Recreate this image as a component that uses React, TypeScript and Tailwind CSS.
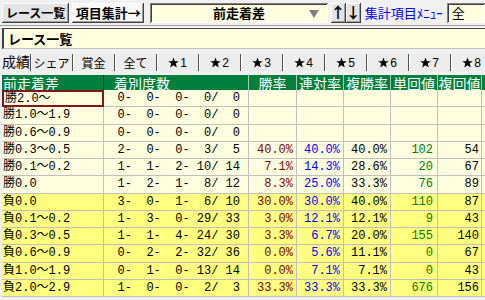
import React from "react";

type Row = {
  label: string;
  n: number[];
  win?: string;
  ren?: string;
  fuku?: string;
  tan?: string;
  fk?: string;
  lose?: boolean;
};

const rows: Row[] = [
  { label: "勝2.0〜", n: [0, 0, 0, 0, 0] },
  { label: "勝1.0〜1.9", n: [0, 0, 0, 0, 0] },
  { label: "勝0.6〜0.9", n: [0, 0, 0, 0, 0] },
  { label: "勝0.3〜0.5", n: [2, 0, 0, 3, 5], win: "40.0%", ren: "40.0%", fuku: "40.0%", tan: "102", fk: "54" },
  { label: "勝0.1〜0.2", n: [1, 1, 2, 10, 14], win: "7.1%", ren: "14.3%", fuku: "28.6%", tan: "20", fk: "67" },
  { label: "勝0.0", n: [1, 2, 1, 8, 12], win: "8.3%", ren: "25.0%", fuku: "33.3%", tan: "76", fk: "89" },
  { label: "負0.0", n: [3, 0, 1, 6, 10], win: "30.0%", ren: "30.0%", fuku: "40.0%", tan: "110", fk: "87", lose: true },
  { label: "負0.1〜0.2", n: [1, 3, 0, 29, 33], win: "3.0%", ren: "12.1%", fuku: "12.1%", tan: "9", fk: "43", lose: true },
  { label: "負0.3〜0.5", n: [1, 1, 4, 24, 30], win: "3.3%", ren: "6.7%", fuku: "20.0%", tan: "155", fk: "140", lose: true },
  { label: "負0.6〜0.9", n: [0, 2, 2, 32, 36], win: "0.0%", ren: "5.6%", fuku: "11.1%", tan: "0", fk: "67", lose: true },
  { label: "負1.0〜1.9", n: [0, 1, 0, 13, 14], win: "0.0%", ren: "7.1%", fuku: "7.1%", tan: "0", fk: "43", lose: true },
  { label: "負2.0〜2.9", n: [1, 0, 0, 2, 3], win: "33.3%", ren: "33.3%", fuku: "33.3%", tan: "676", fk: "156", lose: true },
];

const tabs = ["シェア", "賞金", "全て", "★1", "★2", "★3", "★4", "★5", "★6", "★7", "★8"];

const pad = (v: number) => String(v).padStart(2, " ");
const counts = (n: number[]) =>
  `${pad(n[0])}- ${pad(n[1])}- ${pad(n[2])}- ${pad(n[3])}/ ${pad(n[4])}`;

const grid = "grid grid-cols-[102px_145px_48px_47px_47px_47px_44px_60px]";
const raised =
  "shadow-[inset_-1px_-1px_0_#404040,inset_1px_1px_0_#ffffff,inset_-2px_-2px_0_#a0a0a0]";
const sunken =
  "shadow-[inset_1px_1px_0_#808080,inset_-1px_-1px_0_#ffffff,inset_2px_2px_0_#404040]";

function Star() {
  return (
    <svg width="11" height="11" viewBox="0 0 24 24" className="shrink-0">
      <path d="M12 1 L15 9 L23.5 9.2 L16.8 14.4 L19.2 22.8 L12 17.8 L4.8 22.8 L7.2 14.4 L0.5 9.2 L9 9 Z" fill="#000" />
    </svg>
  );
}

function TabLabel({ t }: { t: string }) {
  if (t.startsWith("★")) {
    return (
      <>
        <Star />
        <span className="font-['Liberation_Sans',sans-serif] text-[12px]">{t.slice(1)}</span>
      </>
    );
  }
  return <>{t}</>;
}

function App() {
  return (
    <div className="w-[485px] h-[300px] overflow-hidden bg-[#f0f0f0] font-['Noto_Sans_CJK_JP',sans-serif] text-black">
      {/* toolbar */}
      <div className="flex items-center h-[25px] pl-[2px] whitespace-nowrap">
        <div className={`flex items-center justify-center w-[71px] h-[20px] bg-[#e4e4e4] text-[12px] font-bold ${raised}`}>
          レース一覧
        </div>
        <div className={`flex items-center justify-center ml-[3px] w-[76px] h-[20px] bg-[#f8f8f8] text-[13px] font-bold ${raised}`}>
          項目集計→
        </div>
        <div className={`relative flex items-center justify-center ml-[6px] w-[187px] h-[20px] bg-[#ffffe0] text-[13px] font-bold ${sunken}`}>
          前走着差
          <div className="absolute right-[9px] top-[7px] w-0 h-0 border-l-[5px] border-r-[5px] border-t-[8px] border-l-transparent border-r-transparent border-t-[#808080]" />
        </div>
        <div className={`flex items-center justify-center ml-[3px] w-[16px] h-[20px] bg-[#e4e4e4] text-[15px] font-bold ${raised}`}>
          ↑
        </div>
        <div className={`flex items-center justify-center w-[16px] h-[20px] bg-[#e4e4e4] text-[15px] font-bold ${raised}`}>
          ↓
        </div>
        <div className="ml-[4px] text-[13px] text-[#0000ff] leading-none">集計項目ﾒﾆｭｰ</div>
        <div className={`flex items-center pl-[5px] ml-[4px] w-[40px] h-[20px] bg-[#ffffe0] text-[13px] ${sunken}`}>
          全
        </div>
      </div>

      {/* separator */}
      <div className="h-[3px] border-t border-[#a0a0a0] border-b border-b-white" />

      {/* title */}
      <div className="ml-[2px] h-[21px] flex items-center pl-[4px] bg-[#ffffe0] border-t border-l-2 border-[#404040] border-b border-b-[#c0c0c0] text-[13px] font-bold">
        レース一覧
      </div>

      {/* tabs */}
      <div className="flex h-[26px] pl-[2px] pt-[2px] whitespace-nowrap">
        <div className="w-[40px] h-[20px] flex items-center justify-center text-[14px] bg-[#f0f0f0]">成績</div>
        {tabs.map((t) => (
          <div
            key={t}
            className="w-[42px] shrink-0 h-[17px] mt-[3px] flex items-center justify-center gap-[1px] text-[12px] border-l border-[#505050] shadow-[inset_1px_0_0_#ffffff] bg-[#ececec]"
          >
            <TabLabel t={t} />
          </div>
        ))}
      </div>

      {/* table */}
      <div className="ml-[2px] w-[540px]">
        <div className={`${grid} h-[15px] bg-[#00803c] text-white text-[14px] leading-none`}>
          <div className="pl-[1px] flex items-center border-r border-[#1a1a1a]">前走着差</div>
          <div className="pl-[10px] flex items-center border-r border-[#a8c8b0]">着別度数</div>
          <div className="flex items-center justify-center border-r border-[#a8c8b0]">勝率</div>
          <div className="flex items-center justify-center border-r border-[#a8c8b0]">連対率</div>
          <div className="flex items-center justify-center border-r border-[#a8c8b0]">複勝率</div>
          <div className="flex items-center justify-center border-r border-[#a8c8b0]">単回値</div>
          <div className="flex items-center justify-center border-r border-[#a8c8b0]">複回値</div>
          <div />
        </div>
        {rows.map((r, i) => (
          <div
            key={r.label}
            className={`${grid} h-[17.25px] text-[12px] leading-none font-['Liberation_Mono','Noto_Sans_CJK_JP',monospace] whitespace-pre ${r.lose ? "bg-[#ffff80]" : "bg-[#ffffe0]"}`}
          >
            <div
              className={`flex items-center pl-[1px] ${i === 0 ? "border-2 border-[#801818]" : "border-r border-b border-[#c0c0c0]"}`}
            >
              {r.label}
            </div>
            <div className="flex items-center justify-end pr-[8px] border-r border-b border-[#c0c0c0]">{counts(r.n)}</div>
            <div className="flex items-center justify-end pr-[3px] border-r border-b border-[#c0c0c0] text-[#800000]">{r.win}</div>
            <div className="flex items-center justify-end pr-[3px] border-r border-b border-[#c0c0c0] text-[#0000ff]">{r.ren}</div>
            <div className="flex items-center justify-end pr-[3px] border-r border-b border-[#c0c0c0]">{r.fuku}</div>
            <div className="flex items-center justify-end pr-[4px] border-r border-b border-[#c0c0c0] text-[#008000]">{r.tan}</div>
            <div className="flex items-center justify-end pr-[2px] border-r border-b border-[#c0c0c0]">{r.fk}</div>
            <div className="border-b border-[#c0c0c0]" />
          </div>
        ))}
      </div>
    </div>
  );
}

export default App;
